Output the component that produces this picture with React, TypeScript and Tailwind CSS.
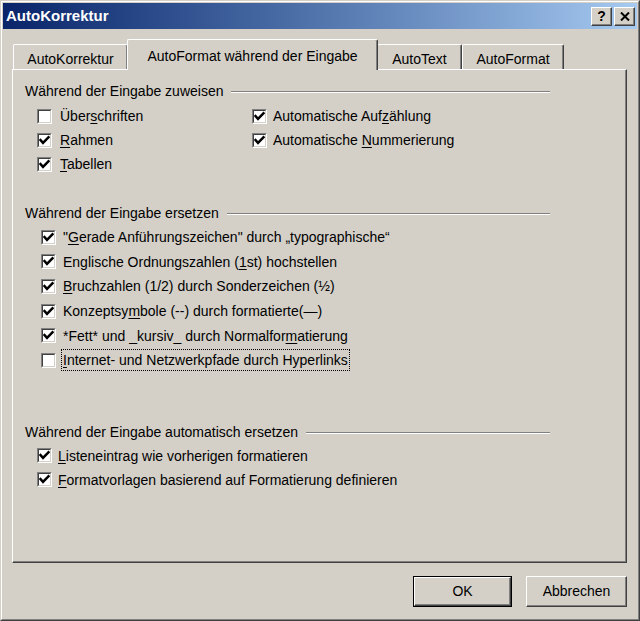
import React from "react";

type Part = string | { u: string };

function Label({ parts }: { parts: Part[] }) {
  return (
    <>
      {parts.map((p, i) =>
        typeof p === "string" ? (
          <span key={i}>{p}</span>
        ) : (
          <span key={i} className="underline underline-offset-2">
            {p.u}
          </span>
        )
      )}
    </>
  );
}

function Box({ checked }: { checked: boolean }) {
  return (
    <span className="inline-flex shrink-0 w-[15px] h-[15px] border-t border-l border-t-[#808080] border-l-[#808080] border-b border-r border-b-white border-r-white">
      <span className="flex flex-1 items-center justify-center bg-white border-t border-l border-t-[#404040] border-l-[#404040] border-b border-r border-b-[#d4d0c8] border-r-[#d4d0c8]">
        {checked && (
          <svg width="11" height="11" viewBox="0 0 11 11">
            <polyline points="1.5,5 4,7.8 9.5,2.2" fill="none" stroke="#000" strokeWidth="2.5" strokeLinecap="square" />
          </svg>
        )}
      </span>
    </span>
  );
}

function Row({
  checked,
  parts,
  gap,
  focus,
  h,
}: {
  checked: boolean;
  parts: Part[];
  gap: string;
  focus?: boolean;
  h: string;
}) {
  return (
    <div className={`flex items-center ${h} ${gap}`}>
      <Box checked={checked} />
      {focus ? (
        <span className="border border-dotted border-black px-[1px] leading-[20px]">
          <Label parts={parts} />
        </span>
      ) : (
        <span className="leading-[18px]">
          <Label parts={parts} />
        </span>
      )}
    </div>
  );
}

function Header({ text }: { text: string }) {
  return (
    <div className="flex items-center w-[525px] h-[18px] gap-[8px]">
      <span className="leading-[18px] whitespace-nowrap">{text}</span>
      <div className="flex-1 h-[2px] mt-[2px] border-t border-t-[#808080] border-b border-b-white" />
    </div>
  );
}

function Tab({ label, w, active }: { label: string; w: string; active?: boolean }) {
  if (active) {
    return (
      <div
        className={`${w} h-[31px] -mb-[1px] relative z-10 bg-[#d4d0c8] border-t border-l border-t-white border-l-white border-r border-r-[#404040] shadow-[inset_-1px_0_#808080] rounded-t-[2px] flex items-start justify-center pt-[7px]`}
      >
        <span className="leading-[18px]">{label}</span>
      </div>
    );
  }
  return (
    <div
      className={`${w} h-[25px] bg-[#d4d0c8] border-t border-l border-t-white border-l-white border-r border-r-[#404040] shadow-[inset_-1px_0_#808080] rounded-t-[2px] flex items-start justify-center pt-[5px]`}
    >
      <span className="leading-[18px]">{label}</span>
    </div>
  );
}

export default function App() {
  return (
    <div className="w-[640px] h-[621px] bg-[#d4d0c8] font-['Liberation_Sans',Arial,sans-serif] text-[14px] text-black border-t border-l border-t-[#d4d0c8] border-l-[#d4d0c8] border-b border-r border-b-[#404040] border-r-[#404040]">
      <div className="h-full flex flex-col border-t border-l border-t-white border-l-white border-b border-r border-b-[#808080] border-r-[#808080] p-[1px]">
        {/* Title bar */}
        <div className="h-[26px] flex items-center bg-linear-to-r from-[#0a246a] to-[#a6caf0] pl-[3px] pr-[2px]">
          <span className="flex-1 text-white font-bold text-[15px] leading-[18px]">AutoKorrektur</span>
          <div className="flex gap-[2px]">
            <div className="w-[21px] h-[19px] bg-[#d4d0c8] border-t border-l border-t-white border-l-white border-b border-r border-b-[#404040] border-r-[#404040] shadow-[inset_-1px_-1px_#808080] flex items-center justify-center font-bold text-[14px] leading-none">
              ?
            </div>
            <div className="w-[21px] h-[19px] bg-[#d4d0c8] border-t border-l border-t-white border-l-white border-b border-r border-b-[#404040] border-r-[#404040] shadow-[inset_-1px_-1px_#808080] flex items-center justify-center">
              <svg width="10" height="9" viewBox="0 0 10 9">
                <path d="M1 0.5 L9 8.5 M9 0.5 L1 8.5" stroke="#000" strokeWidth="2" />
              </svg>
            </div>
          </div>
        </div>

        {/* Tabs */}
        <div className="ml-[9px] mt-[10px] h-[30px] flex items-end pl-[1px]">
          <Tab label="AutoKorrektur" w="w-[115px]" />
          <div className="-ml-[1px] -mr-[1px]">
            <Tab label="AutoFormat während der Eingabe" w="w-[251px]" active />
          </div>
          <Tab label="AutoText" w="w-[85px]" />
          <Tab label="AutoFormat" w="w-[102px]" />
        </div>

        {/* Panel */}
        <div className="ml-[9px] w-[615px] h-[494px] border-t border-l border-t-white border-l-white border-b border-r border-b-[#404040] border-r-[#404040] shadow-[inset_-1px_-1px_#808080] pl-[12px] pt-[12px]">
          <Header text="Während der Eingabe zuweisen" />
          <div className="flex mt-[4px]">
            <div className="flex flex-col pl-[12px] w-[227px]">
              <Row h="h-[24px]" gap="gap-[8px]" checked={false} parts={["Über", { u: "s" }, "chriften"]} />
              <Row h="h-[24px]" gap="gap-[8px]" checked parts={[{ u: "R" }, "ahmen"]} />
              <Row h="h-[24px]" gap="gap-[8px]" checked parts={[{ u: "T" }, "abellen"]} />
            </div>
            <div className="flex flex-col">
              <Row h="h-[24px]" gap="gap-[6px]" checked parts={["Automatische Auf", { u: "z" }, "ählung"]} />
              <Row h="h-[24px]" gap="gap-[6px]" checked parts={["Automatische ", { u: "N" }, "ummerierung"]} />
            </div>
          </div>

          <div className="mt-[28px]">
            <Header text="Während der Eingabe ersetzen" />
          </div>
          <div className="flex flex-col pl-[16px] mt-[3px]">
            <Row h="h-[24.6px]" gap="gap-[7px]" checked parts={['"', { u: "G" }, 'erade Anführungszeichen" durch „typographische“']} />
            <Row h="h-[24.6px]" gap="gap-[7px]" checked parts={["Englische Ordnungszahlen (", { u: "1" }, "st) hochstellen"]} />
            <Row h="h-[24.6px]" gap="gap-[7px]" checked parts={[{ u: "B" }, "ruchzahlen (1/2) durch Sonderzeichen (½)"]} />
            <Row h="h-[24.6px]" gap="gap-[7px]" checked parts={["Konzeptsy", { u: "m" }, "bole (--) durch formatierte(—)"]} />
            <Row h="h-[24.6px]" gap="gap-[7px]" checked parts={["*Fett* und _kursiv_ durch Normalfor", { u: "m" }, "atierung"]} />
            <Row h="h-[24.6px]" gap="gap-[5px]" checked={false} focus parts={[{ u: "I" }, "nternet- und Netzwerkpfade durch Hyperlinks"]} />
          </div>

          <div className="mt-[50px]">
            <Header text="Während der Eingabe automatisch ersetzen" />
          </div>
          <div className="flex flex-col pl-[12px] mt-[3px]">
            <Row h="h-[24px]" gap="gap-[6px]" checked parts={[{ u: "L" }, "isteneintrag wie vorherigen formatieren"]} />
            <Row h="h-[24px]" gap="gap-[6px]" checked parts={[{ u: "F" }, "ormatvorlagen basierend auf Formatierung definieren"]} />
          </div>
        </div>

        {/* Buttons */}
        <div className="mt-[13px] flex justify-end gap-[14px] pr-[10px]">
          <div className="w-[99px] h-[31px] border border-black">
            <div className="w-full h-full border-t border-l border-t-white border-l-white border-b border-r border-b-[#404040] border-r-[#404040] shadow-[inset_-1px_-1px_#808080] flex items-center justify-center">
              OK
            </div>
          </div>
          <div className="w-[101px] h-[31px] border-t border-l border-t-white border-l-white border-b border-r border-b-[#404040] border-r-[#404040] shadow-[inset_-1px_-1px_#808080] flex items-center justify-center">
            Abbrechen
          </div>
        </div>
      </div>
    </div>
  );
}
